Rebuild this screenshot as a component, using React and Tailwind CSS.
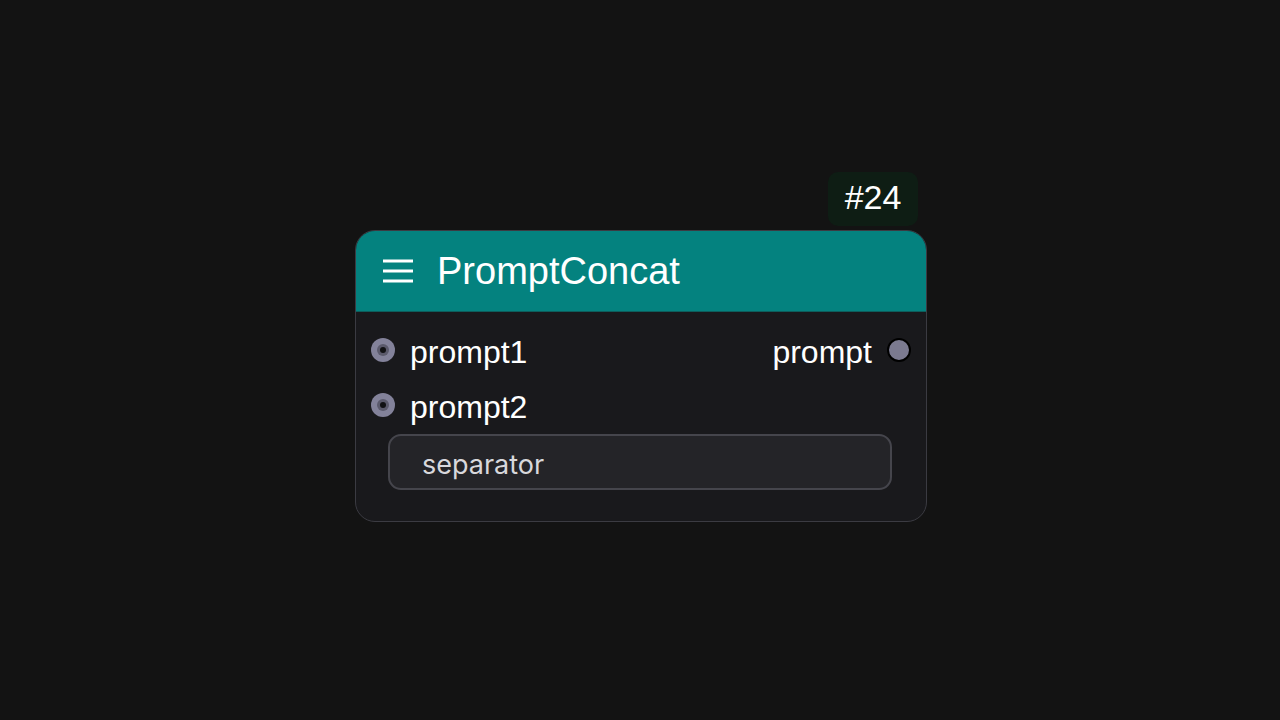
import React from "react";

function InHandle() {
  return (
    <div className="w-[24px] h-[24px] rounded-full bg-[#83829a] flex items-center justify-center shrink-0">
      <div className="w-[12px] h-[12px] rounded-full bg-[#5b5a6c] flex items-center justify-center">
        <div className="w-[6px] h-[6px] rounded-full bg-[#111114]"></div>
      </div>
    </div>
  );
}

export default function App() {
  return (
    <main className="w-full h-[720px] bg-[#131313] flex items-start justify-center font-['Liberation_Sans',Arial,sans-serif]">
      <div className="mt-[172px] ml-[2px] w-[572px] flex flex-col">
        {/* id badge */}
        <div className="flex justify-end pr-[9px]">
          <div className="h-[54px] w-[90px] rounded-[10px] bg-[#0e1d14] text-white text-[34px] flex items-center justify-center">
            <span className="-mt-[3px]">#24</span>
          </div>
        </div>

        {/* node */}
        <div className="mt-[4px] rounded-[20px] border border-[#3b3b42] bg-[#19191c] overflow-hidden">
          <div className="h-[81px] bg-[#04827f] flex items-center gap-[24px] pl-[27px] border-b border-[#0d5e5c]">
            <svg width="30" height="24" viewBox="0 0 30 24" className="shrink-0">
              <path d="M0 2h30M0 12h30M0 22h30" stroke="#ffffff" strokeWidth="3" />
            </svg>
            <span className="text-white text-[38px] leading-none">PromptConcat</span>
          </div>

          <div className="pt-[25px] pb-[31px] px-[15px]">
            <div className="flex items-center justify-between h-[26px]">
              <div className="flex items-center gap-[15px]">
                <InHandle />
                <span className="text-white text-[32px] leading-none mt-[3px]">prompt1</span>
              </div>
              <div className="flex items-center gap-[15px]">
                <span className="text-white text-[32px] leading-none mt-[3px]">prompt</span>
                <div className="w-[24px] h-[24px] rounded-full bg-[#7b7a90] border-2 border-black"></div>
              </div>
            </div>

            <div className="flex items-center gap-[15px] h-[26px] mt-[29px]">
              <InHandle />
              <span className="text-white text-[32px] leading-none mt-[3px]">prompt2</span>
            </div>

            <div className="mt-[16px] ml-[17px] mr-[19px] h-[56px] rounded-[13px] border-2 border-[#45454c] bg-[#242428] flex items-center pl-[32px] font-['Inter',sans-serif] text-[27px] text-[#d8d8dc]">
              <span className="mt-[6px]">separator</span>
            </div>
          </div>
        </div>
      </div>
    </main>
  );
}
